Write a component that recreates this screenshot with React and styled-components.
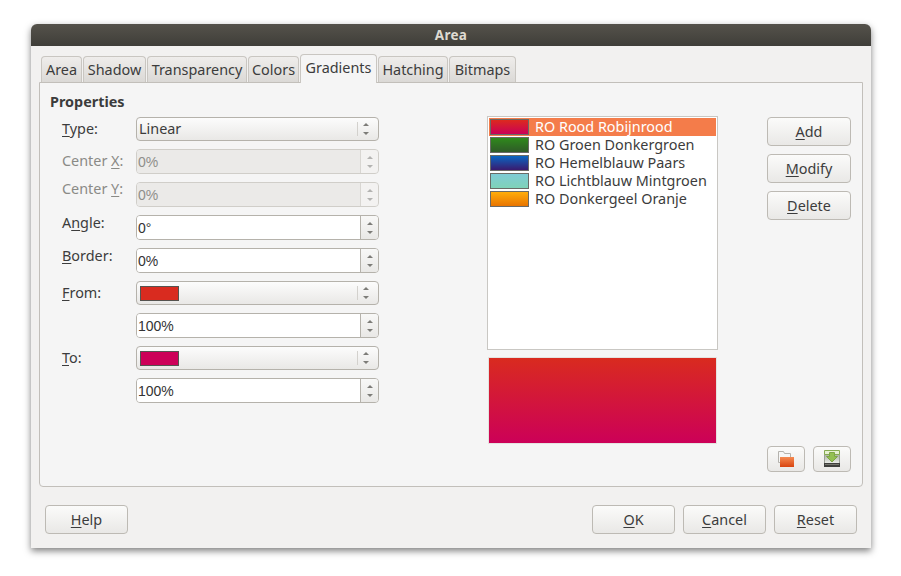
import React from 'react'
import styled, { createGlobalStyle } from 'styled-components'

const uiFont = '"Noto Sans", "Open Sans", sans-serif';

const GlobalStyle = createGlobalStyle`
  html, body {
    margin: 0;
    background: #ffffff;
  }
  * {
    box-sizing: border-box;
  }
`;

const Page = styled.div`
  width: 901px;
  height: 576px;
  padding: 24px 30px 0 31px;
  font-family: ${uiFont};
  font-size: 14.4px;
  color: #3c3c3c;
`;

const Window = styled.div`
  width: 840px;
  height: 524px;
  display: flex;
  flex-direction: column;
  background: #f2f1f0;
  border-radius: 6px 6px 0 0;
  box-shadow: 0 3px 7px rgba(0, 0, 0, 0.5);
`;

const TitleBar = styled.div`
  height: 22px;
  display: flex;
  align-items: center;
  justify-content: center;
  border-radius: 6px 6px 0 0;
  background: linear-gradient(#55524b, #3f3e39);
  color: #dfdbd2;
  font-weight: 700;
  font-size: 13.5px;
  letter-spacing: 0.3px;
`;

const Body = styled.div`
  flex: 1;
  padding: 8px 8px 0;
`;

const TabRow = styled.div`
  height: 28px;
  display: flex;
  align-items: flex-end;
  padding-left: 2px;
  gap: 1px;
`;

const Tab = styled.div`
  position: relative;
  z-index: ${p => (p.$active ? 1 : 0)};
  width: ${p => p.$width}px;
  height: ${p => (p.$active ? 29 : 26)}px;
  margin-bottom: ${p => (p.$active ? -1 : 0)}px;
  display: flex;
  align-items: center;
  justify-content: center;
  padding-bottom: ${p => (p.$active ? 3 : 0)}px;
  border: 1px solid #c9c6c1;
  border-bottom: none;
  border-radius: 4px 4px 0 0;
  background: ${p => (p.$active ? '#f5f5f5' : 'linear-gradient(#efedeb, #dbd9d6)')};
  white-space: nowrap;
`;

const Panel = styled.div`
  height: 405px;
  display: grid;
  grid-template-columns: 437px 231px 133px;
  padding: 11px 0 14px 10px;
  border: 1px solid #c2bfba;
  border-radius: 0 0 4px 4px;
  background: #f5f5f5;
`;

const Properties = styled.div`
  display: flex;
  flex-direction: column;
`;

const Heading = styled.div`
  height: 16px;
  line-height: 16px;
  margin-bottom: 7px;
  font-weight: 700;
`;

const FormRows = styled.div`
  display: flex;
  flex-direction: column;
  gap: 8px;
  padding-left: 12px;
`;

const FormRow = styled.div`
  display: flex;
  align-items: flex-start;
`;

const Label = styled.div`
  width: 74px;
  line-height: 14px;
  padding-top: ${p => p.$top}px;
  color: ${p => (p.$disabled ? '#8a8a86' : '#3c3c3c')};
`;

const Key = styled.span`
  text-decoration: underline;
  text-underline-offset: 2px;
`;

const Spin = styled.div`
  width: 243px;
  height: 25px;
  display: flex;
  border: 1px solid ${p => (p.$disabled ? '#d0cec9' : '#b5b2ab')};
  border-radius: 4px;
  overflow: hidden;
`;

const SpinValue = styled.div`
  flex: 1;
  padding-left: 1px;
  line-height: 24px;
  font-family: "Liberation Sans", Arial, sans-serif;
  font-size: 14px;
  background: ${p => (p.$disabled ? '#ebeae8' : '#ffffff')};
  color: ${p => (p.$disabled ? '#8f8f8b' : '#333333')};
  border-right: 1px solid ${p => (p.$disabled ? '#d8d6d2' : '#b5b2ab')};
`;

const SpinButtons = styled.div`
  width: 17px;
  display: flex;
  flex-direction: column;
  align-items: center;
  justify-content: center;
  gap: 6px;
  background: ${p => (p.$disabled ? '#f0efed' : 'linear-gradient(#f8f8f7, #e9e8e6)')};
  opacity: ${p => (p.$disabled ? 0.55 : 1)};
`;

const ArrowUp = styled.span`
  width: 0;
  height: 0;
  border-left: 3px solid transparent;
  border-right: 3px solid transparent;
  border-bottom: 3px solid #7d7c78;
`;

const ArrowDown = styled.span`
  width: 0;
  height: 0;
  border-left: 3px solid transparent;
  border-right: 3px solid transparent;
  border-top: 3px solid #7d7c78;
`;

const Combo = styled.div`
  width: 243px;
  height: 24px;
  display: flex;
  align-items: center;
  padding: 0 4px 0 2px;
  border: 1px solid #b5b2ab;
  border-radius: 4px;
  background: linear-gradient(#fcfcfc, #e9e8e6);
`;

const ComboText = styled.div`
  flex: 1;
  display: flex;
  align-items: center;
`;

const ComboLabel = styled.span`
  margin-top: -2px;
`;

const ComboDivider = styled.div`
  width: 1px;
  height: 14px;
  background: #d3d1cd;
`;

const ComboArrows = styled.div`
  width: 16px;
  display: flex;
  flex-direction: column;
  align-items: center;
  gap: 6px;
`;

const ColorChip = styled.div`
  width: 39px;
  height: 15px;
  margin-left: 1px;
  border: 1px solid #55534f;
  background: ${p => p.$color};
`;

const Middle = styled.div`
  padding-top: 22px;
  display: flex;
  flex-direction: column;
  gap: 7px;
`;

const List = styled.div`
  height: 234px;
  padding: 1px;
  border: 1px solid #c9c7c3;
  background: #ffffff;
`;

const ListItem = styled.div`
  height: 18px;
  display: flex;
  align-items: center;
  gap: 6px;
  padding-left: 1px;
  background: ${p => (p.$selected ? '#f47c4a' : 'transparent')};
  color: ${p => (p.$selected ? '#ffffff' : '#3c3c3c')};
  white-space: nowrap;
`;

const ItemName = styled.span`
  margin-top: -2px;
`;

const Swatch = styled.div`
  width: 39px;
  height: 16px;
  border: 1px solid #6a6a66;
  background: linear-gradient(${p => p.$from}, ${p => p.$to});
`;

const Preview = styled.div`
  height: 87px;
  margin: 0 1px;
  border: 1px solid #e4e3e0;
  background: linear-gradient(#d92b1f, #cc0058);
`;

const SideButtons = styled.div`
  padding: 23px 0 0 49px;
  display: flex;
  flex-direction: column;
  gap: 8px;
`;

const Button = styled.div`
  width: ${p => p.$width || 84}px;
  height: 29px;
  display: flex;
  align-items: center;
  justify-content: center;
  border: 1px solid #bdbab4;
  border-radius: 4px;
  background: linear-gradient(#fbfbfa, #e9e8e6);
`;

const IconRow = styled.div`
  margin-top: auto;
  display: flex;
  gap: 8px;
`;

const IconButton = styled(Button)`
  width: 38px;
  height: 26px;
`;

const Footer = styled.div`
  margin-top: 18px;
  padding: 0 6px;
  display: flex;
  gap: 8px;
`;

const Spacer = styled.div`
  flex: 1;
`;

function SpinField({ value, disabled }) {
  return (
    <Spin $disabled={disabled}>
      <SpinValue $disabled={disabled}>{value}</SpinValue>
      <SpinButtons $disabled={disabled}>
        <ArrowUp />
        <ArrowDown />
      </SpinButtons>
    </Spin>
  )
}

function ComboField({ children }) {
  return (
    <Combo>
      <ComboText>{children}</ComboText>
      <ComboDivider />
      <ComboArrows>
        <ArrowUp />
        <ArrowDown />
      </ComboArrows>
    </Combo>
  )
}

const tabs = [
  { name: 'Area', width: 41 },
  { name: 'Shadow', width: 63 },
  { name: 'Transparency', width: 100 },
  { name: 'Colors', width: 51 },
  { name: 'Gradients', width: 77, active: true },
  { name: 'Hatching', width: 70 },
  { name: 'Bitmaps', width: 67 },
];

const gradients = [
  { name: 'RO Rood Robijnrood', from: '#dc2a1e', to: '#c90058', selected: true },
  { name: 'RO Groen Donkergroen', from: '#2f8a1c', to: '#2f5a28' },
  { name: 'RO Hemelblauw Paars', from: '#0a66c2', to: '#3a1a6e' },
  { name: 'RO Lichtblauw Mintgroen', from: '#7fcbd6', to: '#7fd2b8' },
  { name: 'RO Donkergeel Oranje', from: '#ffad0a', to: '#e87400' },
];

function FolderIcon() {
  return (
    <svg width="18" height="16" viewBox="0 0 18 16">
      <defs>
        <linearGradient id="folderFront" x1="0" y1="0" x2="0" y2="1">
          <stop offset="0" stopColor="#f58a50" />
          <stop offset="1" stopColor="#d8440f" />
        </linearGradient>
      </defs>
      <path d="M1.5 .5h5l1 2h6v9h-12z" fill="#f6f6f5" stroke="#b4b2ad" />
      <path d="M3 6h14v10H3z" fill="url(#folderFront)" />
    </svg>
  )
}

function SaveIcon() {
  return (
    <svg width="18" height="18" viewBox="0 0 18 18">
      <defs>
        <linearGradient id="saveTray" x1="0" y1="0" x2="0" y2="1">
          <stop offset="0" stopColor="#a9b0a4" />
          <stop offset="1" stopColor="#eef0ec" />
        </linearGradient>
      </defs>
      <path d="M1.5 4.5h15v9h-15z" fill="url(#saveTray)" stroke="#9a9e95" />
      <path d="M1 13h16v4H1z" fill="#3f3f3d" />
      <path d="M2 14h14v1H2z" fill="#77776f" />
      <path d="M1.5 .5h15v4h-15z" fill="#e6f0d2" stroke="#86ab52" />
      <path d="M6.5 2.5h5v4h3l-5.5 5.5-5.5-5.5h3z" fill="#93c052" stroke="#7ea645" />
    </svg>
  )
}

function App() {
  return (
    <Page>
      <GlobalStyle />
      <Window>
        <TitleBar>Area</TitleBar>
        <Body>
          <TabRow>
            {tabs.map(tab => (
              <Tab key={tab.name} $width={tab.width} $active={tab.active}>{tab.name}</Tab>
            ))}
          </TabRow>
          <Panel>
            <Properties>
              <Heading>Properties</Heading>
              <FormRows>
                <FormRow>
                  <Label $top={5}><Key>T</Key>ype:</Label>
                  <ComboField><ComboLabel>Linear</ComboLabel></ComboField>
                </FormRow>
                <FormRow>
                  <Label $top={5} $disabled>Center <Key>X</Key>:</Label>
                  <SpinField value="0%" disabled />
                </FormRow>
                <FormRow>
                  <Label $top={0} $disabled>Center <Key>Y</Key>:</Label>
                  <SpinField value="0%" disabled />
                </FormRow>
                <FormRow>
                  <Label $top={1}>A<Key>n</Key>gle:</Label>
                  <SpinField value="0°" />
                </FormRow>
                <FormRow>
                  <Label $top={1}><Key>B</Key>order:</Label>
                  <SpinField value="0%" />
                </FormRow>
                <FormRow>
                  <Label $top={5}><Key>F</Key>rom:</Label>
                  <ComboField><ColorChip $color="#d92b1f" /></ComboField>
                </FormRow>
                <FormRow>
                  <Label $top={0} />
                  <SpinField value="100%" />
                </FormRow>
                <FormRow>
                  <Label $top={5}><Key>T</Key>o:</Label>
                  <ComboField><ColorChip $color="#cc0058" /></ComboField>
                </FormRow>
                <FormRow>
                  <Label $top={0} />
                  <SpinField value="100%" />
                </FormRow>
              </FormRows>
            </Properties>
            <Middle>
              <List>
                {gradients.map(item => (
                  <ListItem key={item.name} $selected={item.selected}>
                    <Swatch $from={item.from} $to={item.to} />
                    <ItemName>{item.name}</ItemName>
                  </ListItem>
                ))}
              </List>
              <Preview />
            </Middle>
            <SideButtons>
              <Button><span><Key>A</Key>dd</span></Button>
              <Button><span><Key>M</Key>odify</span></Button>
              <Button><span><Key>D</Key>elete</span></Button>
              <IconRow>
                <IconButton><FolderIcon /></IconButton>
                <IconButton><SaveIcon /></IconButton>
              </IconRow>
            </SideButtons>
          </Panel>
          <Footer>
            <Button $width={83}><span><Key>H</Key>elp</span></Button>
            <Spacer />
            <Button $width={83}><span><Key>O</Key>K</span></Button>
            <Button $width={83}><span><Key>C</Key>ancel</span></Button>
            <Button $width={83}><span><Key>R</Key>eset</span></Button>
          </Footer>
        </Body>
      </Window>
    </Page>
  )
}

export default App;
